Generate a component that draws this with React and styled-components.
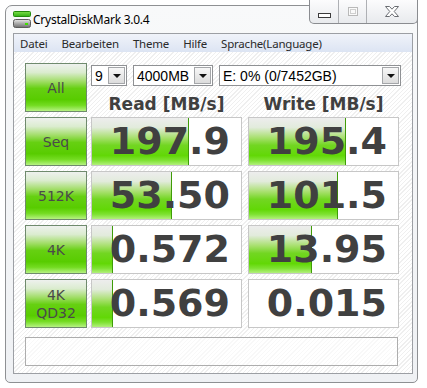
import React from 'react';
import styled, { createGlobalStyle } from 'styled-components';

const Global = createGlobalStyle`
  html, body { margin: 0; padding: 0; background: #ffffff; }
  body { width: 427px; height: 388px; overflow: hidden; }
`;

const Window = styled.div`
  position: relative;
  box-sizing: border-box;
  margin: 5px 0 0 5px;
  width: 413px;
  height: 378px;
  border: 1px solid #8e9093;
  border-radius: 7px 7px 5px 5px;
  background: linear-gradient(#f8f9fa, #eff1f4);
  padding: 0 4px 8px 7px;
  display: flex;
  flex-direction: column;
`;

const TitleBar = styled.div`
  height: 27px;
  display: flex;
  align-items: center;
  gap: 2px;
  font-family: "Noto Sans", sans-serif;
  font-size: 12px;
  letter-spacing: -0.25px;
  color: #000;
`;

const Caption = styled.div`
  position: absolute;
  top: -6px;
  right: -1px;
  height: 23px;
  display: flex;
  border: 1px solid #8a8c90;
  border-top: none;
  border-radius: 0 0 5px 5px;
  background: linear-gradient(#fcfcfd, #e8eaed);
  overflow: hidden;
`;

const CapBtn = styled.div`
  width: ${p => p.$w}px;
  display: flex;
  align-items: center;
  justify-content: center;
  & + & { border-left: 1px solid #aeb0b4; }
`;

const ClientFrame = styled.div`
  flex: 1;
  display: flex;
  flex-direction: column;
  border: 1px solid #9c9fa4;
  background-color: #fcfcfc;
  background-image: repeating-linear-gradient(135deg, #ffffff 0px, #ffffff 2px, #efefef 2px, #efefef 3px);
`;

const MenuBar = styled.div`
  height: 18px;
  display: flex;
  align-items: center;
  gap: 14px;
  padding-left: 6px;
  background: linear-gradient(#f0f3fa, #dce4f3);
  font-family: "Noto Sans", sans-serif;
  font-size: 11.5px;
  letter-spacing: -0.2px;
  color: #2a2a2a;
`;

const Content = styled.div`
  flex: 1;
  display: flex;
  flex-direction: column;
  gap: 5px;
  padding: 11px 13px 7px 11px;
`;

const Row = styled.div`
  display: flex;
  height: 49px;
`;

const Label = styled.div`
  box-sizing: border-box;
  flex: none;
  width: 62px;
  height: 49px;
  margin-right: 4px;
  border: 1px solid #6f8a6d;
  background: linear-gradient(#eef1ee 0%, #dbeccf 18%, #a4de6c 36%, #66d012 52%, #58cc00 76%, #74dc22 88%, #b6f282 100%);
  display: flex;
  align-items: center;
  justify-content: center;
  text-align: center;
  font-family: "DejaVu Sans", sans-serif;
  font-size: 14px;
  line-height: 18px;
  color: #4a4a4a;
`;

const Side = styled.div`
  width: 308px;
  display: flex;
  flex-direction: column;
`;

const ComboRow = styled.div`
  display: flex;
  gap: 6px;
  margin-top: 2px;
`;

const Combo = styled.div`
  box-sizing: border-box;
  flex: none;
  width: ${p => p.$w}px;
  height: 21px;
  border: 1px solid #8f9194;
  background: #fff;
  display: flex;
  align-items: center;
  padding: 0 1px 0 3px;
  font-family: "Liberation Sans", sans-serif;
  font-size: 14px;
  color: #000;
`;

const ComboText = styled.span`
  flex: 1;
  white-space: nowrap;
`;

const Arrow = styled.div`
  box-sizing: border-box;
  width: 17px;
  height: 17px;
  border: 1px solid #a4a6a9;
  background: linear-gradient(#f7f7f7, #dcdcdc);
  display: flex;
  align-items: center;
  justify-content: center;
  &::after {
    content: "";
    border-left: 4px solid transparent;
    border-right: 4px solid transparent;
    border-top: 4px solid #111;
    margin-top: 1px;
  }
`;

const Headers = styled.div`
  display: grid;
  grid-template-columns: 151px 151px;
  column-gap: 6px;
  margin-top: 8px;
  font-family: "DejaVu Sans", sans-serif;
  font-weight: bold;
  font-size: 17px;
  line-height: 20px;
  color: #404040;
  text-align: center;
`;

const Cell = styled.div`
  position: relative;
  box-sizing: border-box;
  flex: none;
  width: 151px;
  height: 49px;
  margin-right: ${p => (p.$last ? 0 : 6)}px;
  border: 1px solid #c7c7c7;
  background: #fff;
  padding-right: 11px;
  text-align: right;
  font-family: "DejaVu Sans", sans-serif;
  font-weight: bold;
  font-size: 38px;
  line-height: 47px;
  color: #404040;
  overflow: hidden;
`;

const Bar = styled.div`
  position: absolute;
  left: 0;
  top: 0;
  bottom: 0;
  width: ${p => p.$w}px;
  box-sizing: border-box;
  border-right: 1px solid #3f9c08;
  background: linear-gradient(#ededed 0%, #e2ebdc 20%, #a8e06e 42%, #72d622 58%, #62d806 80%, #7ee232 90%, #b2f07c 100%);
`;

const Value = styled.span`
  position: relative;
`;

const Comment = styled.div`
  box-sizing: border-box;
  height: 29px;
  margin-top: 4px;
  margin-right: 1px;
  border: 1px solid #adadad;
  background: rgba(255, 255, 255, 0.55);
`;

const TitleIcon = () => (
  <svg width="18" height="17" viewBox="0 0 18 17">
    <defs>
      <linearGradient id="gb" x1="0" y1="0" x2="0" y2="1">
        <stop offset="0" stopColor="#7ee04a" />
        <stop offset="1" stopColor="#2fae12" />
      </linearGradient>
      <linearGradient id="dr" x1="0" y1="0" x2="0" y2="1">
        <stop offset="0" stopColor="#e8e8e8" />
        <stop offset="0.5" stopColor="#a9a9a9" />
        <stop offset="1" stopColor="#6e6e6e" />
      </linearGradient>
    </defs>
    <rect x="0.5" y="0.5" width="17" height="5" rx="1" fill="url(#gb)" stroke="#238a0c" />
    <rect x="0.5" y="8.5" width="17" height="8" rx="2" fill="url(#dr)" stroke="#5c5c5c" />
    <rect x="12" y="12" width="3" height="2" fill="#3fe000" />
  </svg>
);

const MinIcon = () => (
  <svg width="13" height="5" viewBox="0 0 13 5" style={{ marginTop: 8 }}>
    <rect x="0.5" y="0.5" width="12" height="4" fill="#ffffff" stroke="#3c3c3c" />
  </svg>
);

const MaxIcon = () => (
  <svg width="10" height="9" viewBox="0 0 10 9">
    <rect x="0.5" y="0.5" width="9" height="8" fill="#fafafa" stroke="#b9b9b9" />
    <rect x="2.5" y="2.5" width="5" height="4" fill="none" stroke="#cfcfcf" />
  </svg>
);

const CloseIcon = () => (
  <svg width="14" height="11" viewBox="0 0 14 11">
    <path
      d="M0.5 0.5 H4.5 L7 3.2 L9.5 0.5 H13.5 L9.2 5.5 L13.5 10.5 H9.5 L7 7.8 L4.5 10.5 H0.5 L4.8 5.5 Z"
      fill="#ffffff"
      stroke="#6a6d72"
      strokeLinejoin="round"
    />
  </svg>
);

const rows = [
  { label: ['Seq'], read: '197.9', rw: 97, write: '195.4', ww: 97 },
  { label: ['512K'], read: '53.50', rw: 80, write: '101.5', ww: 89 },
  { label: ['4K'], read: '0.572', rw: 21, write: '13.95', ww: 63 },
  { label: ['4K', 'QD32'], read: '0.569', rw: 21, write: '0.015', ww: 0 },
];

const menu = ['Datei', 'Bearbeiten', 'Theme', 'Hilfe', 'Sprache(Language)'];

export default function App() {
  return (
    <>
      <Global />
      <Window>
        <TitleBar>
          <TitleIcon />
          <span>CrystalDiskMark 3.0.4</span>
        </TitleBar>
        <Caption>
          <CapBtn $w={28}><MinIcon /></CapBtn>
          <CapBtn $w={27}><MaxIcon /></CapBtn>
          <CapBtn $w={50}><CloseIcon /></CapBtn>
        </Caption>
        <ClientFrame>
          <MenuBar>
            {menu.map(m => <span key={m}>{m}</span>)}
          </MenuBar>
          <Content>
            <Row>
              <Label>All</Label>
              <Side>
                <ComboRow>
                  <Combo $w={36}><ComboText>9</ComboText><Arrow /></Combo>
                  <Combo $w={80}><ComboText>4000MB</ComboText><Arrow /></Combo>
                  <Combo $w={182}><ComboText>E: 0% (0/7452GB)</ComboText><Arrow /></Combo>
                </ComboRow>
                <Headers>
                  <span>Read [MB/s]</span>
                  <span>Write [MB/s]</span>
                </Headers>
              </Side>
            </Row>
            {rows.map((r, i) => (
              <Row key={i}>
                <Label>
                  <div>
                    {r.label.map(l => <div key={l}>{l}</div>)}
                  </div>
                </Label>
                <Cell>
                  {r.rw > 0 && <Bar $w={r.rw} />}
                  <Value>{r.read}</Value>
                </Cell>
                <Cell $last>
                  {r.ww > 0 && <Bar $w={r.ww} />}
                  <Value>{r.write}</Value>
                </Cell>
              </Row>
            ))}
            <Comment />
          </Content>
        </ClientFrame>
      </Window>
    </>
  );
}
